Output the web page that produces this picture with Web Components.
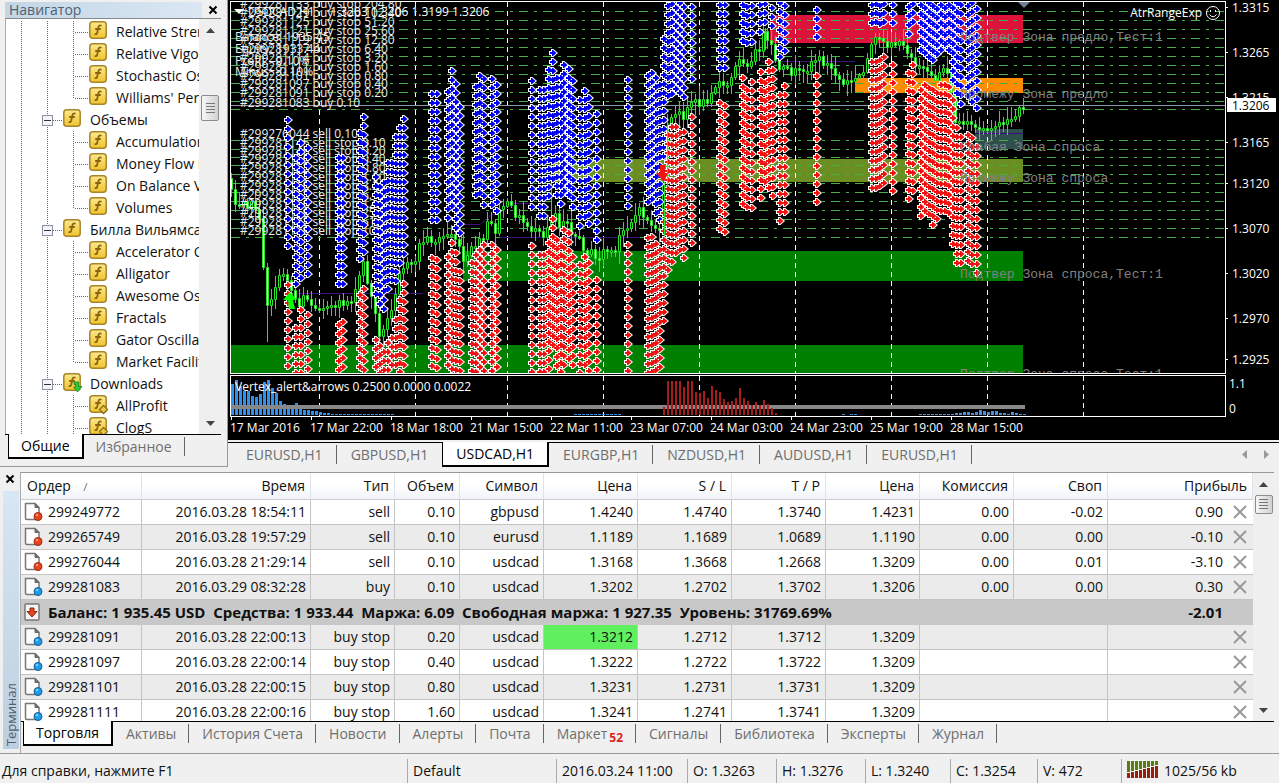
<!DOCTYPE html>
<html lang="ru">
<head>
<meta charset="utf-8">
<title>USDCAD,H1</title>
<style>
html,body{margin:0;height:100%}
body{font:14px/20px "Open Sans","Noto Sans",sans-serif;color:#111;background:#f0f0f0;overflow:hidden}
</style>
</head>
<body>
<trade-app></trade-app>
<script>
const define=(name,html,init)=>customElements.define(name,class extends HTMLElement{
  constructor(){super();this.attachShadow({mode:'open'}).innerHTML=html}
  connectedCallback(){if(init&&!this.ready){this.ready=true;init(this,this.shadowRoot)}}
});

/* ---------- small parts ---------- */
define('close-button',`<style>
:host{display:block;width:16px;height:16px}
button{display:block;width:16px;height:16px;padding:0;border:0;background:none}
svg{display:block}</style>
<button aria-label="Закрыть"><svg width="16" height="16"><path d="M4.500 4.500l7 7M11.500 4.500l-7 7" stroke="#000" stroke-width="2"/></svg></button>`);

define('scroll-bar',`<style>
:host{display:flex;flex-direction:column;align-items:center;background:#efefef;width:var(--bar,19px)}
button{border:0;background:none;padding:0;width:100%;height:22px;display:flex;justify-content:center;align-items:center}
.gap{height:var(--gap,0px)}
.thumb{box-sizing:border-box;width:18px;height:var(--thumb,26px);border:1px solid #8c8c8c;border-radius:2px;background:linear-gradient(90deg,#f6f6f6,#d2d2d2);display:flex;align-items:center;justify-content:center}
.fill{flex:1}</style>
<button aria-label="Вверх"><svg width="9" height="5"><path d="M0 5L4.500 0L9 5z" fill="#444"/></svg></button>
<div class="gap"></div>
<div class="thumb"><svg width="9" height="11"><path d="M0 .5h9M0 3.500h9M0 6.500h9M0 9.500h9" stroke="#777"/></svg></div>
<div class="fill"></div>
<button aria-label="Вниз"><svg width="9" height="5"><path d="M0 0L4.500 5L9 0z" fill="#444"/></svg></button>`);

define('tab-button',`<style>
:host{display:flex;align-items:center;height:23px}
button{font:inherit;line-height:20px;color:#6e6e6e;border:0;background:none;padding:0 var(--pad,12px);height:22px;white-space:nowrap;display:flex;align-items:center}
:host::after{content:"";width:1px;height:19px;background:#666}
:host([plain])::after,:host([active])::after{display:none}
:host([active]){margin-top:-1px;height:25px;box-sizing:border-box;background:#fff;border:solid #000;border-width:0 2px 2px 1px}
:host([active]) button{color:#000;padding:0 var(--active-pad,12px)}
::slotted(sup){font:700 12px/12px "Open Sans",sans-serif;color:#d22;margin:8px 0 0 2px}</style>
<button role="tab"><slot></slot></button>`);

/* ---------- navigator ---------- */
const F_ICON=kind=>`<svg width="20" height="20" viewBox="0 0 20 20"><defs><linearGradient id="y" x2="0" y2="1"><stop stop-color="#fbe98c"/><stop offset="1" stop-color="#f0c52e"/></linearGradient></defs>
<rect x=".8" y=".8" width="16.400" height="16.400" rx="3" fill="url(#y)" stroke="#a8842c" stroke-width="1.500"/>
<path d="M12.500 4.800C10.500 3.900 9.600 4.800 9.300 6.600L8.200 11.800C7.900 13.200 7 13.500 5.600 12.900M6.200 8h5.600" fill="none" stroke="#8c6410" stroke-width="1.800"/>
${kind==='user'?'<path d="M14.500 10.500l4 4-4 4-4-4z" fill="#ecc840" stroke="#8c6c1c" stroke-width="1.300"/>':''}
${kind==='down'?'<path d="M11 9h4.500v4.500H19L14.500 19 10.500 14h2V11.500H11z" fill="#2ec83a" stroke="#118a1c" stroke-width=".8"/>':''}</svg>`;
define('tree-item','',(el,root)=>{
  const group=el.hasAttribute('group'),last=el.hasAttribute('last');
  const dots='stroke="#666" stroke-dasharray="1 1"';
  root.innerHTML=`<style>:host{display:flex;height:22px;align-items:center;white-space:nowrap;line-height:20px;color:#111}
  svg{display:block;flex:none}.icon{margin:0 8px 2px 1px;height:20px;width:19px}</style>
  <svg width="28" height="22"><path d="M15.500 0v22" ${dots}/></svg>
  <svg width="28" height="22"><path d="M13.500 0v22" ${dots}/>${group?`<path d="M19 11.500h9" ${dots}/><rect x="8.500" y="6.500" width="10" height="10" fill="#f4f4f8" stroke="#8890a8"/><path d="M10 11.500h7" stroke="#334"/>`:''}</svg>
  ${group?'':`<svg width="26" height="22"><path d="M11.500 0v${last?11:22}M13 11.500h13" ${dots}/></svg>`}
  <div class="icon">${F_ICON(el.getAttribute('kind'))}</div><slot></slot>`;
});
define('nav-panel',`<style>
:host{display:flex;flex-direction:column;box-sizing:border-box;width:228px;padding:1px 6px 6px 5px;border:solid #999;border-width:0 1px 1px 0}
header{display:flex;height:17px;align-items:center;color:#4f6072}
h2{flex:1;font:inherit;line-height:16px;margin:0;padding-left:4px;background:linear-gradient(90deg,#c3d6e6,#dbe7f3);height:16px}
close-button{margin:0 0 0 3px}
.box{flex:1;display:flex;min-height:0;border-top:1px solid #888;border-left:1px solid #aaa;background:#fff}
.tree{flex:1;overflow:hidden;padding-top:2px}
nav{display:flex;border-top:1px solid #000;padding-left:3px;height:25px;--pad:12px}
</style>
<header><h2>Навигатор</h2><close-button></close-button></header>
<div class="box"><div class="tree">
<tree-item>Relative Strength Index</tree-item><tree-item>Relative Vigor Index</tree-item><tree-item>Stochastic Oscillator</tree-item><tree-item last>Williams' Percent Range</tree-item>
<tree-item group>Объемы</tree-item><tree-item>Accumulation/Distribution</tree-item><tree-item>Money Flow Index</tree-item><tree-item>On Balance Volume</tree-item><tree-item last>Volumes</tree-item>
<tree-item group>Билла Вильямса</tree-item><tree-item>Accelerator Oscillator</tree-item><tree-item>Alligator</tree-item><tree-item>Awesome Oscillator</tree-item><tree-item>Fractals</tree-item><tree-item>Gator Oscillator</tree-item><tree-item last>Market Facilitation Index</tree-item>
<tree-item group kind="down">Downloads</tree-item><tree-item kind="user">AllProfit</tree-item><tree-item kind="user">ClogS</tree-item>
</div><scroll-bar style="--gap:54px;--bar:22px"></scroll-bar></div>
<nav role="tablist"><tab-button active>Общие</tab-button><tab-button>Избранное</tab-button></nav>`);

/* ---------- chart ---------- */
const BLUE=[[288,120,248],[296,158,287],[301,143,278],[308,148,278],[339,158,287],[343,158,287],[360,133,263],[364,117,252],[376,177,293],[380,187,310],[384,183,315],[388,163,290],[392,163,286],[396,137,280],[400,128,265],[404,119,255],[432,94,218],[437,94,222],[448,92,217],[452,71,207],[456,84,227],[460,107,235],[476,87,200],[480,76,192],[484,79,207],[492,79,207],[497,85,212],[532,81,210],[540,90,218],[544,90,220],[549,70,200],[553,53,182],[557,78,200],[561,78,208],[564,65,193],[569,69,198],[573,81,210],[580,100,225],[585,91,222],[589,98,225],[597,114,242],[628,80,208],[648,76,200],[652,73,202],[656,78,217],[660,85,218],[664,39,160],[668,6,98],[672,4,93],[676,8,92],[680,3,92],[684,7,97],[692,7,80],[720,5,68],[725,5,68],[743,5,40],[747,7,43],[752,6,42],[760,5,33],[765,4,26],[772,8,27],[780,3,57],[785,6,52],[817,10,37],[872,5,25],[876,4,24],[880,6,24],[884,4,24],[893,5,25],[909,7,35],[913,4,28],[921,5,50],[925,8,52],[929,3,57],[933,6,60],[937,9,55],[941,5,50],[945,8,50],[949,5,50],[953,8,82],[957,3,93],[961,5,103],[968,6,100],[972,3,102],[977,9,108]];
const RED=[[288,285,371],[296,328,371],[301,310,371],[308,315,371],[339,325,371],[343,322,371],[360,295,371],[364,289,371],[376,340,371],[380,346,371],[384,352,371],[388,343,371],[392,338,371],[396,320,371],[400,300,371],[404,284,371],[432,258,371],[437,260,371],[448,257,371],[452,243,368],[456,253,371],[460,272,371],[472,263,371],[476,255,371],[480,250,371],[484,245,371],[492,245,371],[497,250,371],[532,246,371],[540,255,371],[544,255,371],[549,243,371],[553,219,350],[557,240,364],[561,246,371],[564,230,371],[569,233,360],[573,257,371],[580,265,371],[585,257,371],[589,263,371],[597,280,371],[628,245,371],[648,238,371],[652,237,371],[656,244,371],[660,250,371],[664,213,327],[668,135,273],[672,127,266],[676,127,257],[680,133,253],[684,132,261],[692,117,243],[720,103,232],[725,106,233],[743,78,208],[747,90,205],[752,82,210],[761,72,198],[765,83,188],[769,62,190],[773,70,200],[780,95,222],[785,86,213],[817,76,202],[872,62,190],[876,62,188],[880,60,188],[884,57,187],[893,65,193],[909,73,200],[913,65,193],[921,90,218],[925,85,217],[929,88,220],[933,90,225],[937,93,220],[941,85,217],[945,85,215],[949,87,215],[953,100,245],[957,128,262],[961,137,267],[968,135,262],[972,138,267],[977,147,273]];
const PRICE=[231,178,235,198,240,203,245,197,250,205,258,205,261,222,263,240,267,300,271,305,276,285,281,279,287,270,291,285,296,295,300,305,305,293,313,304,316,310,325,305,331,300,335,312,340,305,348,301,356,298,361,275,365,263,370,285,375,305,380,330,383,338,388,322,395,300,401,270,408,262,411,272,415,265,421,245,428,238,438,240,448,235,455,232,461,250,466,265,475,245,485,240,490,220,497,230,503,203,508,205,515,210,523,220,530,226,538,232,545,240,551,220,557,212,561,225,568,215,573,230,580,240,588,250,595,253,598,262,605,250,613,250,617,255,621,237,628,225,636,216,643,210,648,220,656,225,662,235,665,185,668,125,673,120,680,113,686,115,691,101,700,103,708,102,712,90,720,81,725,88,731,83,736,72,740,55,745,60,753,63,755,55,760,50,765,35,770,45,775,50,780,72,787,70,797,72,805,74,813,60,820,58,830,65,838,75,845,85,852,80,857,80,865,72,870,50,875,42,880,40,887,45,892,40,900,45,910,50,917,62,923,66,932,80,937,78,943,68,950,70,953,95,957,120,963,123,972,127,980,130,987,125,992,125,997,130,1002,122,1010,120,1017,115,1023,107];
const GRID_X=[319,415,507,603,699,795,891,987,1083];
const LEVELS=[11,20,29,38,47,56,65,74,83,92,101,109,140,149,157,165,174,183,192,201,210,219,228,237];
const ZONES=[[770,15,253,28,'#dc143c'],[855,78,168,15,'#ff8c00'],[975,129,48,20,'#2f4f4f'],[553,159,470,23,'#6b8e23'],[463,251,560,30,'#008000'],[231,345,792,28,'#008000']];
const ZONE_TEXT=[[41,'Подтвер Зона предло,Тест:1'],[98,'Промежу Зона предло'],[151,'Слабая Зона спроса'],[182,'Промежу Зона спроса'],[278,'Подтвер Зона спроса,Тест:1'],[378,'Подтвер Зона спроса,Тест:1']];
const ORDERS=[[8,'133 buy stop 204.80'],[17,'129 buy stop 102.40'],[26,'125 buy stop 51.20'],[35,'121 buy stop 25.60'],[44,'119 buy stop 12.80'],[53,'117 buy stop 6.40'],[62,'114 buy stop 3.20'],[71,'111 buy stop 1.60'],[80,'101 buy stop 0.80'],[88,'097 buy stop 0.40'],[97,'091 buy stop 0.20'],[107,'083 buy 0.10'],[147,'145 sell stop 0.10'],[155,'148 sell stop 0.20'],[163,'150 sell stop 0.40'],[172,'153 sell stop 0.80'],[181,'157 sell stop 1.60'],[190,'160 sell stop 3.20'],[199,'163 sell stop 6.40'],[208,'166 sell stop 12.80'],[217,'169 sell stop 25.60'],[226,'172 sell stop 51.20'],[235,'179 sell stop 102.40']];
const markers=(cols,fill)=>{
  let d='';
  cols.forEach(([x,a,b])=>{for(let y=a;y<=b+2;y+=9)d+=`M${x-3} ${y-1}h2v-2h1l3.500 3-3.500 3h-1v-2h-2z`});
  return `<path d="${d}" fill="${fill}" stroke="#fff" stroke-width="2" paint-order="stroke"/>`;
};
const priceAt=x=>{
  for(let i=2;i<PRICE.length;i+=2)if(x<=PRICE[i]){const t=(x-PRICE[i-2])/(PRICE[i]-PRICE[i-2]);return PRICE[i-1]+(PRICE[i+1]-PRICE[i-1])*t}
  return PRICE[PRICE.length-1];
};
const candles=()=>{
  let wick='',up='',down='',seed=7;
  const rnd=()=>(seed=(seed*1103515245+12345)%2147483648)/2147483648;
  let open=priceAt(231);
  for(let x=231;x<=1023;x+=4){
    const close=Math.round(priceAt(x+2)+(rnd()-.5)*9),o=Math.round(open);
    const top=Math.min(o,close),h=Math.max(2,Math.abs(o-close));
    wick+=`M${x+.5} ${Math.round(top-rnd()*11-2)}V${top}M${x+.5} ${top+h}V${Math.round(top+h+rnd()*11+2)}`;
    const body=`M${x-1+.5} ${top+.5}h2v${h}h-2z`;
    if(close>o)down+=body;else up+=body;
    open=close;
  }
  wick+='M267.500 300V342M383.500 335V362M551.500 167V215M765.500 28V50M461.500 230V245';
  return `<path d="${wick}" stroke="#28e628" fill="none"/><path d="${up}" stroke="#28e628" fill="#000"/><path d="${down}" stroke="#28e628" fill="#e8ffe8"/>`;
};
const gridLines=h=>`<path d="${GRID_X.map(x=>`M${x+.5} 2V${h}`).join('')}" stroke="#fff" stroke-dasharray="5 4"/>`;
const plotSvg=()=>`<svg width="100%" height="100%" aria-label="USDCAD,H1"><g transform="translate(-231,-2)">
${ZONES.map(z=>`<rect x="${z[0]}" y="${z[1]}" width="${z[2]}" height="${z[3]}" fill="${z[4]}"/>`).join('')}
${gridLines(400)}
<path d="${LEVELS.map(y=>`M231 ${y+.5}H3000`).join('')}" stroke="#45b045" stroke-dasharray="9 6 3 6"/>
<path d="M231 105.500H3000" stroke="#8a97a8"/>
<path d="M283 293.500H423M506 203.500H532M500 237.500H640M762 61.500H855M975 133.500H1023M461 224.500H480L492 214.500H500" stroke="#3a107a" fill="none"/>
${candles()}
<g fill="#eee">
<text x="240" y="138">#299276044 sell 0.10</text>
${ORDERS.map(o=>`<text x="240" y="${o[0]}">#299281${o[1]}</text>`).join('')}
<text x="235" y="41">Balance: 1935.45</text><text x="235" y="53">Equity: 1933.44</text><text x="235" y="65">Profit: -0.10%</text><text x="235" y="76">Minus: -0.10%</text></g>
${markers(BLUE,'#0000f0')}${markers(RED,'#f01010')}
<path d="M664.500 236V186h3V124h3" stroke="#28e628" fill="none"/>
<path d="M290 292l7 8h-4l2 9h-6l-1-9h-5z" fill="#0f0"/><path d="M660 165h5v8h3l-4 9-8-9h4z" fill="#f01414"/>
<path d="M234 9h10l-5 5z" fill="#fff"/><path d="M1018 2h12l-6 6z" fill="#708090"/>
<text x="248" y="16" fill="#fff">USDCAD,H1&#160;&#160;&#160;&#160; 1.3203 1.3206 1.3199 1.3206</text>
<g class="mono">${ZONE_TEXT.map(z=>`<text x="960" y="${z[0]}">${z[1]}</text>`).join('')}</g>
</g>
<svg x="100%" overflow="visible"><g fill="none" stroke="#fff"><circle cx="-12" cy="11" r="6.500"/><path d="M-15.500 12.500q3.500 4.500 7 0M-14.500 8v2M-9.500 8v2"/></g><text x="-23" y="15" text-anchor="end" fill="#fff">AtrRangeExp</text></svg>
</svg>`;
const BLUE_BARS=[31,35,29,24,24,19,18,21,33,35,27,22,14,11,9,8,12,8,5,5,4,4,3,2,2,1,1,1,1,1,1,1,1,1,1,1,1,1,1,1,1];
const RED_BARS=[8,34,34,34,34,28,34,34,23,22,24,17,29,25,23,16,13,14,17,27,17,14,10,13,10,15,11,7,2];
const TAIL_BARS=[1,1,1,1,1,1,1,1,1,2,2,3,3,2,3,5,4,3,4,4,2,2,1,3,2,1,1];
const bars=(list,x0,w,fill)=>list.map((h,i)=>`<rect x="${x0+i*4}" y="${415-h}" width="${w}" height="${h}" fill="${fill}"/>`).join('');
const indSvg=()=>`<svg width="100%" height="100%"><g transform="translate(-231,-376)">
<path d="${GRID_X.map(x=>`M${x+.5} 376V416`).join('')}" stroke="#fff" stroke-dasharray="5 4"/>
${bars(BLUE_BARS,231,3,'#2e90f0')}${bars(Array(12).fill(1),574,3,'#2e90f0')}
<rect x="231" y="405" width="794" height="4" fill="#888"/>
${bars(RED_BARS,663,2,'#a81c1c')}${bars([1,0,1,1],842,3,'#2e90f0')}${bars(TAIL_BARS,919,3,'#4a8fd8')}
<text x="235" y="391" fill="#fff">Vertex_alert&amp;arrows 0.2500 0.0000 0.0022</text></g></svg>`;
const axisSvg=()=>`<svg width="100%" height="100%"><g transform="translate(-1226,-1)" fill="#fff">
${[[7,'1.3315'],[52,'1.3265'],[97,'1.3215'],[142,'1.3165'],[183,'1.3120'],[228,'1.3070'],[273,'1.3020'],[318,'1.2970'],[359,'1.2925']].map(a=>`<rect x="1226" y="${a[0]}" width="2" height="1"/><text x="1232" y="${a[0]+5}">${a[1]}</text>`).join('')}
<rect x="1227" y="98" width="49" height="14"/><text x="1232" y="110" fill="#000">1.3206</text></g></svg>`;
define('price-chart',`<style>
:host{display:grid;grid-template:minmax(0,1fr) 42px 23px/minmax(0,1fr) 53px;background:#000;padding:1px 0 0 2px;min-height:0;font:12px/16px "Open Sans",sans-serif}
.pane{box-sizing:border-box;border:1px solid #fff;overflow:hidden}
.plot{margin-bottom:1px}
svg{display:block}svg svg{overflow:visible}
.mono{font:13px "Liberation Mono",monospace;fill:#808080}
.side{color:#fff;display:flex;flex-direction:column;justify-content:space-between;padding:1px 0 0 3px}
.time{color:#fff;display:flex;grid-column:1/3;overflow:hidden}
.time span{flex:none;width:80px;white-space:nowrap;line-height:20px}
.time span::before{content:"";display:block;width:1px;height:3px;background:#fff;margin:0 0 -2px 1px}
</style>
<div class="pane plot">${plotSvg()}</div><div>${axisSvg()}</div>
<div class="pane">${indSvg()}</div><div class="side"><span>1.1</span><span>0</span></div>
<div class="time">${['17 Mar 2016','17 Mar 22:00','18 Mar 18:00','21 Mar 15:00','22 Mar 11:00','23 Mar 07:00','24 Mar 03:00','24 Mar 23:00','25 Mar 19:00','28 Mar 15:00'].map(t=>`<span>${t}</span>`).join('')}</div>`);

define('chart-window',`<style>
:host{display:flex;flex-direction:column;min-width:0;flex:1}
price-chart{flex:1}
nav{display:flex;gap:1px;border-top:1px solid #000;margin-top:2px;padding-left:5px;height:24px;--pad:13px;--active-pad:13px}
.end{margin-left:auto;display:flex;align-items:center;gap:17px;padding-right:10px;height:22px}
.end button{border:0;padding:0;background:none;display:flex}
</style>
<price-chart></price-chart>
<nav role="tablist"><tab-button>EURUSD,H1</tab-button><tab-button plain>GBPUSD,H1</tab-button><tab-button active>USDCAD,H1</tab-button><tab-button>EURGBP,H1</tab-button><tab-button>NZDUSD,H1</tab-button><tab-button>AUDUSD,H1</tab-button><tab-button>EURUSD,H1</tab-button>
<div class="end"><button aria-label="Назад"><svg width="5" height="9"><path d="M5 0v9L0 4.500z" fill="#999"/></svg></button><button aria-label="Вперёд"><svg width="5" height="9"><path d="M0 0v9l5-4.500z" fill="#999"/></svg></button></div></nav>`);

/* ---------- terminal ---------- */
const ROWS=[
['299249772','2016.03.28 18:54:11','sell','0.10','gbpusd','1.4240','1.4740','1.3740','1.4231','0.00','-0.02','0.90'],
['299265749','2016.03.28 19:57:29','sell','0.10','eurusd','1.1189','1.1689','1.0689','1.1190','0.00','0.00','-0.10'],
['299276044','2016.03.28 21:29:14','sell','0.10','usdcad','1.3168','1.3668','1.2668','1.3209','0.00','0.01','-3.10'],
['299281083','2016.03.29 08:32:28','buy','0.10','usdcad','1.3202','1.2702','1.3702','1.3206','0.00','0.00','0.30'],
null,
['299281091','2016.03.28 22:00:13','buy stop','0.20','usdcad','1.3212','1.2712','1.3712','1.3209'],
['299281097','2016.03.28 22:00:14','buy stop','0.40','usdcad','1.3222','1.2722','1.3722','1.3209'],
['299281101','2016.03.28 22:00:15','buy stop','0.80','usdcad','1.3231','1.2731','1.3731','1.3209'],
['299281111','2016.03.28 22:00:16','buy stop','1.60','usdcad','1.3241','1.2741','1.3741','1.3209']];
const DOC=c=>`<svg width="20" height="20" viewBox="0 0 20 20"><path d="M1.500 1.500h9.500l4 4v12h-12q-1.500 0-1.500-1.500z" fill="#fdfdfd" stroke="#777" stroke-width="1.500"/><path d="M11 1.500v4h4z" fill="#777" stroke="#666"/><circle cx="14" cy="14.500" r="4" fill="${c}" stroke="${c==='#e8431c'?'#9c2a10':'#125f94'}"/><circle cx="13" cy="13" r="1.300" fill="#fff" opacity=".45"/></svg>`;
const BAL=`<svg width="20" height="20" viewBox="0 0 20 20"><rect x="1" y="2" width="14" height="16" rx="1" fill="#f6f6f6" stroke="#777" stroke-width="1.500"/><path d="M6 6h4v3.500h3L8 15l-5-5.500h3z" fill="#e8431c" stroke="#8c2a10"/></svg>`;
const CROSS=`<button aria-label="Закрыть ордер"><svg width="14" height="14"><path d="M1 1l12 12M13 1L1 13" stroke="#999" stroke-width="2"/></svg></button>`;
const COLS=[121,169,84,65,84,94,94,94,94,94,94,0];
const HEAD=['Ордер','Время','Тип','Объем','Символ','Цена','S / L','T / P','Цена','Комиссия','Своп','Прибыль'];
define('order-table',`<style>
:host{display:block;overflow:hidden;background:#fff}
table{width:100%;table-layout:fixed;border-collapse:separate;border-spacing:0}
th{font-weight:400;height:27px;padding:0 5px 0 0;text-align:right;box-sizing:border-box;border-bottom:1px solid #ccc;border-right:1px solid #dde3ea;background:linear-gradient(#fff 40%,#f1f4f8)}
th:first-child{text-align:left;padding-left:6px}
td{height:25px;box-sizing:border-box;padding:0 4px 0 0;text-align:right;border-bottom:1px solid #c4c4c4;border-right:1px solid #c4c4c4;white-space:nowrap}
td:first-child{padding-left:3px}
td:last-child{border-right:0}
svg{display:block}
th svg{display:inline-block;margin-left:12px}
.o{display:flex;align-items:center;gap:4px;height:24px}.o svg{flex:none}
.p{display:flex;align-items:center;justify-content:flex-end;gap:10px;padding-right:2px}
.p i{width:14px}
tr.alt td{background:#ebebeb}
tr.bal td{background:#c8c8c8;border-color:#c8c8c8;font-weight:700;font-size:15px}
.bal .t{white-space:pre}
tr.alt td.hit{background:#5fef5f;padding:0}
td.hit span{display:block;padding-right:4px;height:24px;line-height:24px}
button{border:0;background:none;padding:0;display:block}
</style>
<table><colgroup>${COLS.map(w=>w?`<col style="width:${w}px">`:'<col>').join('')}</colgroup>
<thead><tr>${HEAD.map((h,i)=>`<th scope="col">${h}${i?'':'<svg width="5" height="8"><path d="M1 8L4 0" stroke="#777"/></svg>'}</th>`).join('')}</tr></thead>
<tbody>${ROWS.map((r,n)=>{
  if(!r)return `<tr class="bal"><td colspan="11"><div class="o">${BAL}<span class="t">Баланс: 1 935.45 USD  Средства: 1 933.44  Маржа: 6.09  Свободная маржа: 1 927.35  Уровень: 31769.69%</span></div></td><td><div class="p">-2.01<i></i></div></td></tr>`;
  const c=r[2]==='sell'?'#e8431c':'#1c9be8',tds=[`<td><div class="o">${DOC(c)}${r[0]}</div></td>`];
  for(let i=1;i<9;i++)tds.push(`<td${n===5&&i===5?' class="hit"':''}><span>${r[i]}</span></td>`);
  if(r[9])tds.push(`<td>${r[9]}</td><td>${r[10]}</td>`);else tds.push('<td colspan="2"></td>');
  tds.push(`<td><div class="p">${r[11]||''}${CROSS}</div></td>`);
  return `<tr${n%2?' class="alt"':''}>${tds.join('')}</tr>`;
}).join('')}</tbody></table>`);
define('terminal-panel',`<style>
:host{display:flex;padding:5px 5px 0 0;height:281px}
.side{width:20px;flex:none;display:flex;flex-direction:column;align-items:center}
.side close-button{flex:none;margin:-1px 0 4px}
.strip{flex:1;width:16px;margin:0 1px 4px 2px;background:linear-gradient(#d9e6f3,#bccfe0);display:flex;align-items:flex-end;justify-content:center;color:#4f6072}
.strip span{writing-mode:vertical-rl;transform:rotate(180deg);line-height:16px;font-size:13px;padding-top:3px}
.body{flex:1;min-width:0;display:flex;flex-direction:column;border-top:1px solid #999;border-left:1px solid #aaa}
.view{display:flex;height:248px}
order-table{flex:1;min-width:0}
nav{display:flex;gap:1px;border-top:1px solid #000;padding-left:2px;height:26px}
</style>
<div class="side"><close-button></close-button><div class="strip"><span>Терминал</span></div></div>
<div class="body"><div class="view"><order-table></order-table><scroll-bar style="--thumb:19px;--bar:21px"></scroll-bar></div>
<nav role="tablist"><tab-button active>Торговля</tab-button><tab-button>Активы</tab-button><tab-button>История Счета</tab-button><tab-button>Новости</tab-button><tab-button>Алерты</tab-button><tab-button>Почта</tab-button><tab-button>Маркет<sup>52</sup></tab-button><tab-button>Сигналы</tab-button><tab-button>Библиотека</tab-button><tab-button>Эксперты</tab-button><tab-button>Журнал</tab-button></nav></div>`);

define('status-bar',`<style>
:host{display:flex;border-top:1px solid #999;height:29px;align-items:stretch}
span{box-sizing:border-box;flex:none;width:var(--w);border-left:1px solid #aaa;padding-left:5px;margin:5px 0 0;line-height:24px;white-space:nowrap;display:flex;align-items:center;gap:5px}
span:first-of-type{flex:1;border:0;padding-left:2px}svg{margin-bottom:3px}</style>
<span>Для справки, нажмите F1</span><span style="--w:149px">Default</span><span style="--w:131px">2016.03.24 11:00</span><span style="--w:89px">O: 1.3263</span><span style="--w:89px">H: 1.3276</span><span style="--w:85px">L: 1.3240</span><span style="--w:87px">C: 1.3254</span><span style="--w:84px">V: 472</span><span style="--w:158px"><svg width="32" height="17">${[0,1,2,3,4,5,6,7].map(i=>`<rect x="${i*4}" width="3" height="${11-i}" fill="#5a7d10"/><rect x="${i*4}" y="${12-i}" width="3" height="${5+i}" fill="#96200c"/>`).join('')}</svg>1025/56 kb</span>`);

define('trade-app',`<style>
:host{display:flex;flex-direction:column;height:100vh}
.top{flex:1;display:flex;min-height:0}
</style><div class="top"><nav-panel></nav-panel><chart-window></chart-window></div><terminal-panel></terminal-panel><status-bar></status-bar>`);
</script>
</body>
</html>
